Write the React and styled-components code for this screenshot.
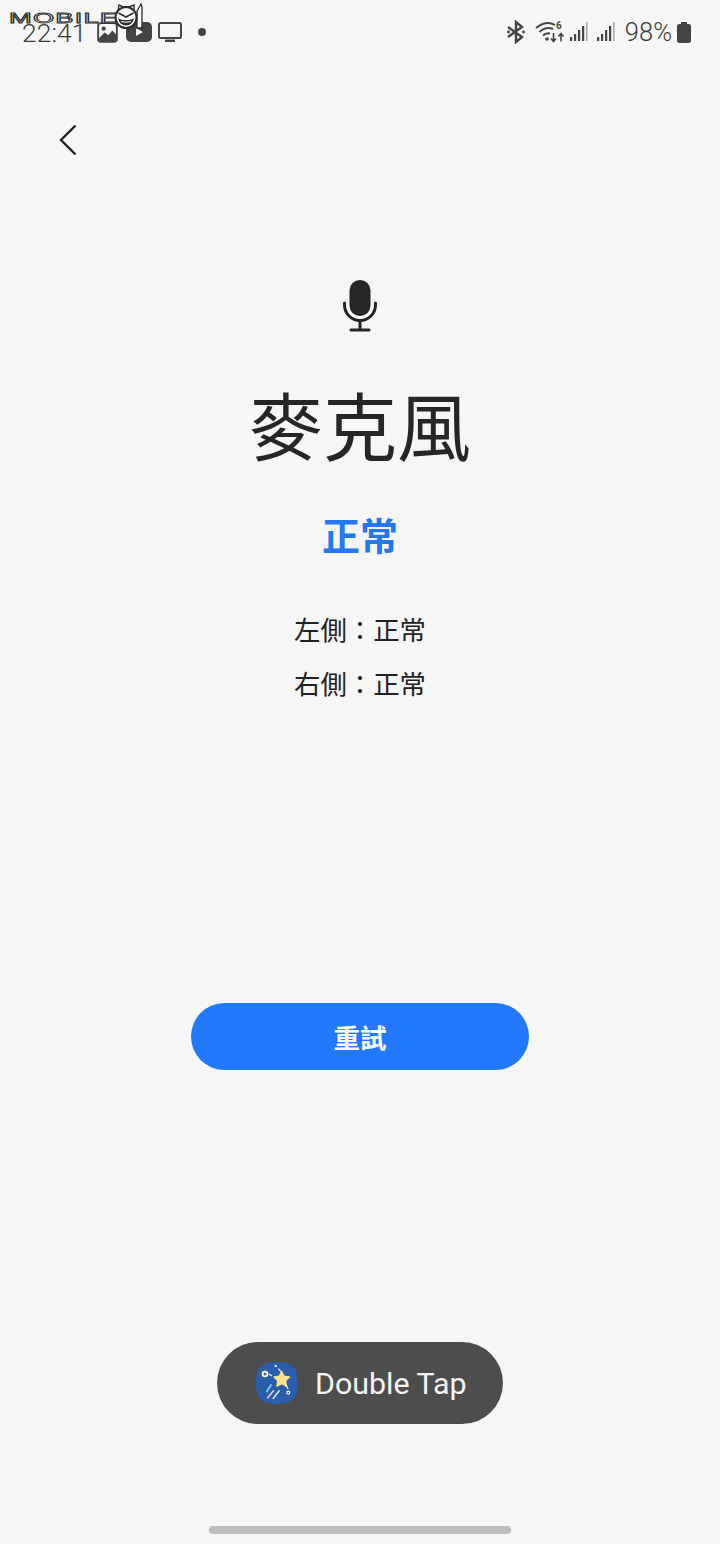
import React from 'react';
import styled, { createGlobalStyle } from 'styled-components';

const GlobalStyle = createGlobalStyle`
    html, body {
        margin: 0;
        padding: 0;
        background: #f6f6f6;
    }
`;

const Page = styled.div`
    position: relative;
    width: 720px;
    height: 1544px;
    overflow: hidden;
    display: flex;
    flex-direction: column;
    align-items: center;
    background: #f6f6f6;
    color: #252525;
    font-family: "Noto Sans CJK TC", "Noto Sans", sans-serif;
`;

const StatusBar = styled.div`
    width: 100%;
    height: 64px;
    box-sizing: border-box;
    padding: 0 29px 0 22px;
    display: flex;
    align-items: center;
    justify-content: space-between;
    color: #3c3c3c;
`;

const StatusGroup = styled.div`
    display: flex;
    align-items: center;
`;

const Clock = styled.span`
    font-family: Roboto, sans-serif;
    font-size: 26.5px;
    font-weight: 300;
    width: 75px;
`;

const Battery = styled.span`
    font-family: Roboto, sans-serif;
    font-size: 25.5px;
    font-weight: 300;
    margin: 0 5px 0 10px;
`;

const Dot = styled.span`
    width: 8px;
    height: 8px;
    border-radius: 50%;
    background: #444;
    margin-left: 16px;
`;

const Watermark = styled.div`
    position: absolute;
    left: 9px;
    top: 3px;
    display: flex;
    align-items: center;
    height: 30px;
`;

const WatermarkText = styled.span`
    display: inline-block;
    font-family: "Liberation Sans", sans-serif;
    font-weight: 400;
    font-size: 14px;
    line-height: 14px;
    width: 54px;
    color: #fff;
    -webkit-text-stroke: 0.8px #2c2c2c;
    transform: scaleX(1.95);
    transform-origin: left center;
    letter-spacing: 0.6px;
`;

const WatermarkFace = styled.svg`
    margin-left: 49px;
`;

const BackRow = styled.div`
    width: 100%;
    box-sizing: border-box;
    padding: 59px 0 0 58px;
    height: 124px;
    display: flex;
`;

const MicIcon = styled.svg`
    margin-top: 91px;
    display: block;
`;

const Title = styled.h1`
    margin: 40px 0 0;
    font-size: 74px;
    line-height: 100px;
    font-weight: 400;
    color: #262626;
`;

const Result = styled.div`
    margin-top: 36px;
    font-size: 38px;
    line-height: 50px;
    font-weight: 700;
    color: #2478f0;
`;

const Detail = styled.div`
    font-size: 26.4px;
    line-height: 54px;
    color: #222;
    margin-top: ${(p) => p.$top || 0}px;
`;

const RetryButton = styled.button`
    margin-top: 293px;
    width: 338px;
    height: 67px;
    border: 0;
    border-radius: 34px;
    background: #2379fb;
    color: #fff;
    font-family: inherit;
    font-size: 26.5px;
    font-weight: 700;
    padding: 0 0 1px;
`;

const Toast = styled.div`
    margin-top: 272px;
    width: 286px;
    height: 82px;
    box-sizing: border-box;
    padding-left: 39px;
    border-radius: 41px;
    background: #4d4d4d;
    color: #f4f4f4;
    display: flex;
    align-items: center;
    gap: 17px;
    font-family: Roboto, sans-serif;
    font-size: 30.4px;
`;

const HomeBar = styled.div`
    margin-top: 102px;
    width: 302px;
    height: 8px;
    border-radius: 4px;
    background: #bdbdbd;
`;

const ImageIcon = () => (
    <svg width="21" height="21" viewBox="0 0 22 22">
        <rect x="1.2" y="1.2" width="19.6" height="19.6" rx="3" fill="none" stroke="#444" strokeWidth="2" />
        <circle cx="7" cy="7" r="2.2" fill="#444" />
        <path d="M2 17 L8 11 L12 14 L16 9 L20 13 V18 Q20 20 18 20 H4 Q2 20 2 18 Z" fill="#444" />
    </svg>
);

const PlayIcon = () => (
    <svg width="26" height="20" viewBox="0 0 26 20" style={{ marginLeft: 8 }}>
        <rect width="26" height="20" rx="5" fill="#444" />
        <path d="M10 6 L17 10 L10 14 Z" fill="#f6f6f6" />
    </svg>
);

const ScreenIcon = () => (
    <svg width="24" height="20" viewBox="0 0 24 20" style={{ marginLeft: 6 }}>
        <rect x="1" y="1" width="22" height="15" rx="1.5" fill="none" stroke="#444" strokeWidth="2" />
        <rect x="7" y="17.5" width="10" height="2.5" fill="#444" />
    </svg>
);

const BluetoothIcon = () => (
    <svg width="20" height="24" viewBox="0 0 20 24" style={{ marginRight: 9 }}>
        <path d="M2 7 L16 17 L10 22 V2 L16 7 L2 17" fill="none" stroke="#444" strokeWidth="2.4" />
        <circle cx="2.5" cy="12" r="1.4" fill="#444" />
        <circle cx="17.5" cy="12" r="1.4" fill="#444" />
    </svg>
);

const WifiIcon = () => (
    <svg width="31" height="22" viewBox="0 0 31 22">
        <path d="M1 7 Q11 -1 20 4" fill="none" stroke="#444" strokeWidth="2" />
        <path d="M4.5 11 Q11 5 18 8" fill="none" stroke="#444" strokeWidth="2" />
        <path d="M8 14.5 Q11 11.5 15 12.5" fill="none" stroke="#444" strokeWidth="2" />
        <circle cx="12" cy="18" r="1.8" fill="#444" />
        <path d="M18.5 12 V20 M16 17.5 L18.5 20.5 L21 17.5" fill="none" stroke="#444" strokeWidth="1.6" />
        <path d="M26 20.5 V13 M23.5 15.5 L26 12.5 L28.5 15.5" fill="none" stroke="#444" strokeWidth="1.6" />
        <text x="21" y="8" fontFamily="Roboto, sans-serif" fontSize="10" fontWeight="700" fill="#444">6</text>
    </svg>
);

const SignalIcon = ({ gap }) => (
    <svg width="18" height="20" viewBox="0 0 18 20" style={{ marginLeft: gap }}>
        <rect x="0" y="15" width="2.2" height="4" fill="#444" />
        <rect x="4" y="12" width="2.2" height="7" fill="#444" />
        <rect x="8" y="8" width="2.2" height="11" fill="#444" />
        <rect x="12" y="4" width="2.2" height="15" fill="#444" />
        <rect x="16" y="0" width="1.6" height="19" fill="#aaa" />
    </svg>
);

const BatteryIcon = () => (
    <svg width="14" height="21" viewBox="0 0 14 21">
        <rect x="4" y="0" width="6" height="3" fill="#444" />
        <rect x="0" y="2" width="14" height="19" rx="2.5" fill="#444" />
    </svg>
);

const FaceLogo = () => (
    <WatermarkFace width="34" height="30" viewBox="0 0 34 30">
        <path d="M25 8 L29 1 L30 4 V25 H25 Z" fill="#fff" stroke="#2c2c2c" strokeWidth="1.3" />
        <path d="M6 8 L7 2 L11 4 H17 L22 2 L22 8 Z" fill="#fff" stroke="#2c2c2c" strokeWidth="1.4" />
        <circle cx="14" cy="14.5" r="10.5" fill="#fff" stroke="#2c2c2c" strokeWidth="2" />
        <path d="M6.5 10 L14 14 L21.5 10" fill="none" stroke="#2c2c2c" strokeWidth="1.8" />
        <path d="M6 15.5 Q14 19 22 15.5 Q20 22.5 14 22.5 Q8 22.5 6 15.5 Z" fill="#2c2c2c" />
        <path d="M9 18.5 Q14 20 19 18.5" fill="none" stroke="#fff" strokeWidth="1" />
    </WatermarkFace>
);

const AppBadge = () => (
    <svg width="42" height="42" viewBox="0 0 42 42">
        <path d="M21 0 C36 0 42 6 42 21 C42 36 36 42 21 42 C6 42 0 36 0 21 C0 6 6 0 21 0 Z" fill="#2a5ead" />
        <circle cx="9" cy="12" r="2.4" fill="none" stroke="#fff" strokeWidth="1.8" />
        <path d="M13 12 L16 14" stroke="#fff" strokeWidth="1.2" />
        <circle cx="19.7" cy="4" r="1.3" fill="#dce6f8" />
        <path d="M22.3 6.6 L25 9.5" stroke="#dce6f8" strokeWidth="1.2" />
        <path d="M25.7 9.5 L28 14.3 L33.3 15 L29.5 18.7 L30.4 24 L25.7 21.5 L21 24 L21.9 18.7 L18.1 15 L23.4 14.3 Z" fill="#fbe08a" stroke="#fbe08a" strokeWidth="1.6" strokeLinejoin="round" />
        <path d="M30 23 L32 27" stroke="#fff" strokeWidth="1.2" />
        <circle cx="32.3" cy="30.6" r="1.5" fill="none" stroke="#fff" strokeWidth="1.1" />
        <path d="M15 23 L10.7 29.7" stroke="#7fd0ea" strokeWidth="1.7" strokeLinecap="round" />
        <path d="M17.3 29 L11.7 35.7" stroke="#f3c6d6" strokeWidth="1.7" strokeLinecap="round" />
        <path d="M23 29 L17.3 36.3" stroke="#cfe4f5" strokeWidth="1.7" strokeLinecap="round" />
    </svg>
);

const App = () => {
    return <Page>
        <GlobalStyle />
        <StatusBar>
            <StatusGroup>
                <Clock>22:41</Clock>
                <ImageIcon />
                <PlayIcon />
                <ScreenIcon />
                <Dot />
            </StatusGroup>
            <StatusGroup>
                <BluetoothIcon />
                <WifiIcon />
                <SignalIcon gap={4} />
                <SignalIcon gap={9} />
                <Battery>98%</Battery>
                <BatteryIcon />
            </StatusGroup>
        </StatusBar>
        <Watermark>
            <WatermarkText>MOBILE</WatermarkText>
            <FaceLogo />
        </Watermark>
        <BackRow>
            <svg width="20" height="34" viewBox="0 0 20 34">
                <path d="M17.5 2.5 L3 17 L17.5 31.5" fill="none" stroke="#222" strokeWidth="2.4" />
            </svg>
        </BackRow>
        <MicIcon width="38" height="54" viewBox="0 0 38 54">
            <rect x="8.5" y="1" width="21" height="36" rx="10.5" fill="#252525" />
            <path d="M3.5 24 V26 A15.5 15.5 0 0 0 34.5 26 V24" fill="none" stroke="#252525" strokeWidth="3" strokeLinecap="round" />
            <path d="M19 42 V51" stroke="#252525" strokeWidth="3" />
            <path d="M10 51 H28" stroke="#252525" strokeWidth="3" strokeLinecap="round" />
        </MicIcon>
        <Title>麥克風</Title>
        <Result>正常</Result>
        <Detail $top={43}>左側：正常</Detail>
        <Detail>右側：正常</Detail>
        <RetryButton>重試</RetryButton>
        <Toast>
            <AppBadge />
            Double Tap
        </Toast>
        <HomeBar />
    </Page>
};

export default App;
